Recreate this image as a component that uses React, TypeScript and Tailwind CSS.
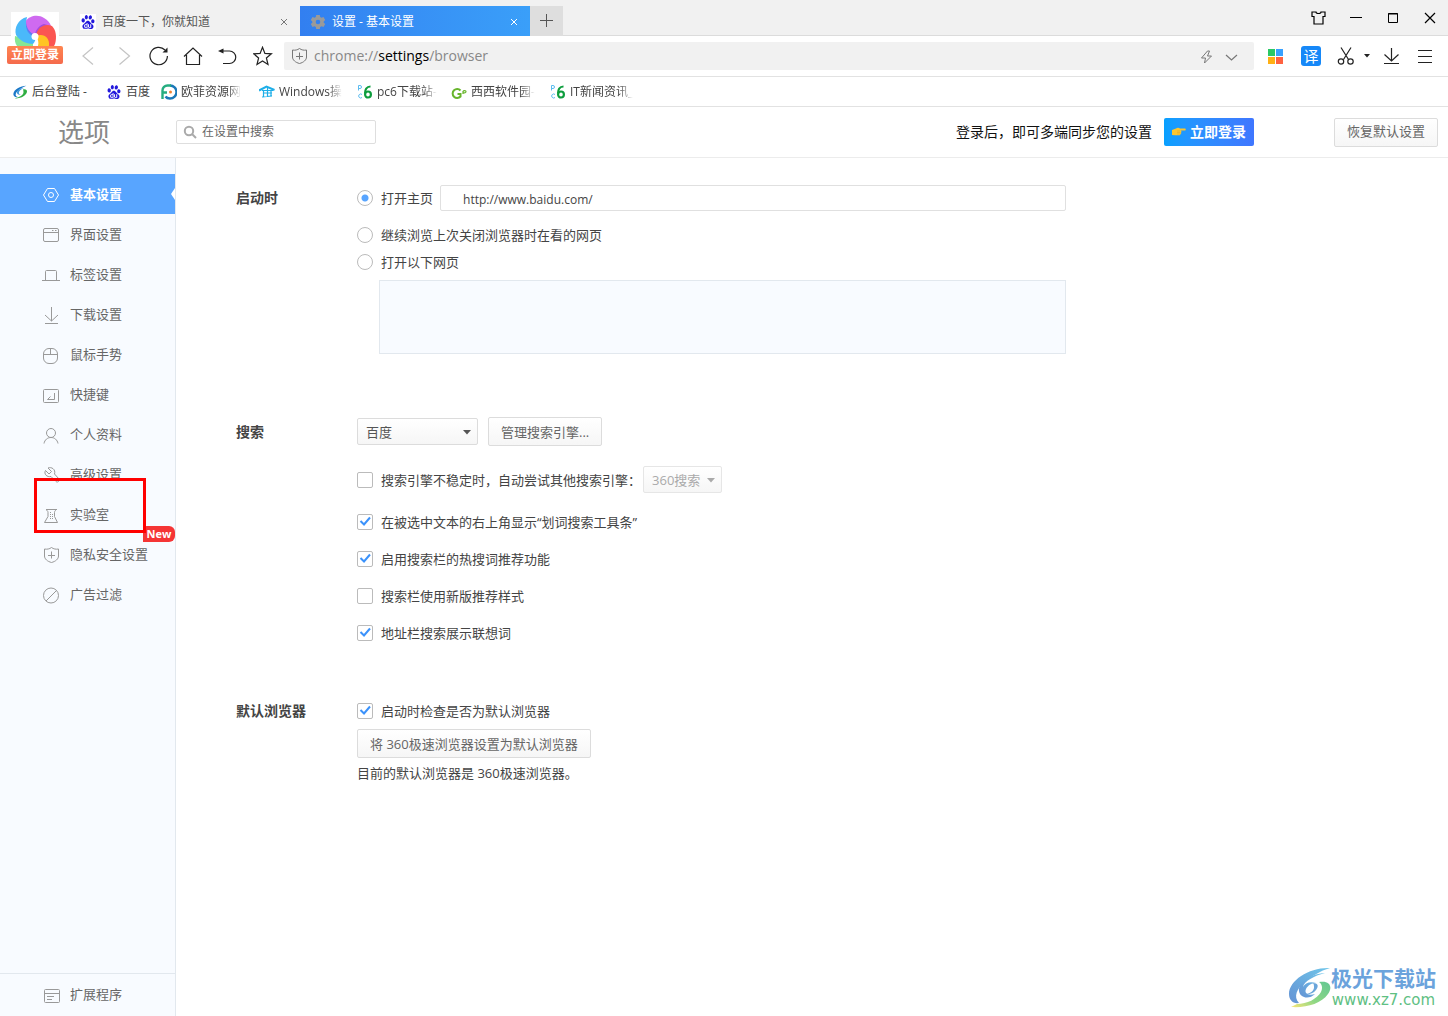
import { useState } from "react";
import type { ReactNode } from "react";
import clsx from "clsx";
import { SiBaidu } from "react-icons/si";

const lineIcon = {
    width: 18,
    height: 18,
    viewBox: "0 0 18 18",
    fill: "none",
    stroke: "currentColor",
    className: "shrink-0",
    "aria-hidden": true,
} as const;

const toolIcon = {
    width: 20,
    height: 20,
    viewBox: "0 0 20 20",
    fill: "none",
    stroke: "currentColor",
    strokeWidth: 1.2,
    "aria-hidden": true,
} as const;

function PinwheelLogo() {
    return (
        <svg width="48" height="34" viewBox="0 0 48 34" aria-hidden="true">
            <rect width="48" height="34" fill="#fff" />
            <path d="M4 24c4 1 12 2 18 8v2H6c-2-3-2.500-6-2-10z" fill="#86e694" />
            <path d="M16 5C7 7 3 16 5 23c3 5 10 9 17 9 2-2 3-5 2-8C17 21 14 13 16 5z" fill="#4ab9fa" />
            <path d="M15.500 8c-2 9 2 15 8.500 17l1-6c-4-2-8-6-9.500-11z" fill="#5a7df4" />
            <path d="M15 9c3-5 12-7 18-3 4 2 6 5 7 8-8-2-13 1-16 9-5-2-9-7-9-14z" fill="#cf6af0" />
            <path d="M24 22c1-5 5-9 9-10l7 2c-7-1-12 2-14 10z" fill="#a14be0" />
            <path d="M25 24c1-9 9-13 16-10 4 4 5 11 3 18l-1 2h-6c0-7-4-11-12-10z" fill="#fb5652" />
            <path d="M25 24c8-3 14 2 13 10H27c1-4 0-7-2-10z" fill="#ffc423" />
            <circle cx="24" cy="24.500" r="3.500" fill="#fff" />
        </svg>
    );
}

function SwirlIcon({ size = 14 }: { size?: number }) {
    return (
        <svg width={size} height={size} viewBox="0 0 42 42" aria-hidden="true">
            <path d="M40 2C22 2 2 13 1 27c0 7 6 11 14 9-8-2-9-9-3-16C18 13 28 7 40 2z" fill="#1b78c8" />
            <path d="M33 10c-10-1-20 5-21 12-1 6 6 9 12 6-5 0-8-3-6-7 2-5 8-9 15-11z" fill="#3b97d8" />
            <path d="M30 13c12-3 15 6 9 14-6 9-20 14-34 13 14-2 23-8 26-15 1-5 0-9-1-12z" fill="#2fae42" />
        </svg>
    );
}

function WatermarkSwirl() {
    return (
        <svg width="42" height="42" viewBox="0 0 42 42" aria-hidden="true">
            <defs>
                <linearGradient id="swirl-blue" x1="1" y1="0" x2="0" y2="1">
                    <stop offset="0" stopColor="#6fc6ea" />
                    <stop offset="1" stopColor="#6593d4" />
                </linearGradient>
                <linearGradient id="swirl-green" x1="1" y1="0" x2="0" y2="1">
                    <stop offset="0" stopColor="#62c792" />
                    <stop offset="0.600" stopColor="#8fd784" />
                    <stop offset="1" stopColor="#fae678" />
                </linearGradient>
            </defs>
            <path d="M41 1C21 0 0 13 0 27c0 6 4 10 10 9-6-6-2-15 6-21C23 9 31 4 41 1z" fill="url(#swirl-blue)" />
            <path d="M36 6C21 7 9 16 10 24c1 7 10 9 16 3-7 2-11-1-9-5 2-4 6-6 10-6-6-2-11 0-13 4 1-6 11-11 22-14z" fill="url(#swirl-blue)" />
            <path d="M24 16c5 0 6 3 3 7-3 4-8 5-12 4 5 0 9-2 10-6 0-2 0-4-1-5z" fill="#6aa5da" />
            <path d="M30 15c11-2 14 5 9 12-7 10-22 14-37 13l6-3c10 0 20-5 24-12 2-4 1-8-2-10z" fill="url(#swirl-green)" />
        </svg>
    );
}

function Pc6Icon() {
    return (
        <svg width="16" height="16" viewBox="0 0 16 16" fill="none" aria-hidden="true">
            <path d="M1.500 6.500v-5H3a1.500 1.500 0 0 1 0 3H1.500M5 10.500a2 2 0 1 0 0 3" stroke="#5cbcf0" />
            <path d="M13.500 2.500C9.500 2.500 8 6 8 9.500" stroke="#0d9d3d" strokeWidth="2.200" />
            <ellipse cx="11" cy="10.500" rx="2.900" ry="3" stroke="#0d9d3d" strokeWidth="2.200" />
        </svg>
    );
}

function FpIcon() {
    return (
        <svg width="16" height="16" viewBox="0 0 16 16" fill="none" aria-hidden="true">
            <path d="M9 1.500a6.500 6.500 0 0 1 0 13c-2 0-3.500-.500-4.500-2" stroke="#1b78b8" strokeWidth="2.400" />
            <path d="M10 1.500H6.500a5 5 0 0 0-5 5V15M1.500 8.500H6" stroke="#25ad80" strokeWidth="2.400" />
            <circle cx="9.500" cy="8" r="1.500" fill="#f08332" />
        </svg>
    );
}

function GraduateIcon() {
    return (
        <svg width="16" height="16" viewBox="0 0 16 16" fill="none" stroke="#1daee8" aria-hidden="true">
            <path d="M0 6.500L7.500 2.500 15.500 6" strokeWidth="2" />
            <path d="M3 6.500h11M4 9h9M3 13l10-1M4.500 6v7M8.500 4v8.500M12 6v6" strokeWidth="1.200" />
        </svg>
    );
}

function GrIcon() {
    return (
        <svg width="16" height="16" viewBox="0 0 16 16" fill="none" stroke="#68b52c" aria-hidden="true">
            <path d="M9.500 6.500a4.500 4.500 0 1 0 0 6V10H6.500" strokeWidth="2" />
            <path d="M12 10V7M12 7.500c.500-1.300 3-1.300 3 0s-1.300 1.500-3 1.200" strokeWidth="1.200" />
        </svg>
    );
}

function HandIcon() {
    return (
        <svg width="14" height="12" viewBox="0 0 14 12" aria-hidden="true">
            <path d="M0 4l4-1.500c1-1 3-1 4 0h5c1 0 1 2 0 2H8.500c1.200.400 1.200 1.500.500 1.800.500.500.400 1.400-.500 1.600 0 .900-.600 1.400-1.500 1.400H3L0 9z" fill="#fcc62f" />
            <path d="M5 5h3M5 6.500h3.500M5 8h3" stroke="#dda028" strokeWidth="0.500" />
        </svg>
    );
}

function GearIcon() {
    return (
        <svg width="16" height="16" viewBox="0 0 16 16" aria-hidden="true">
            <path
                fill="#9a9a9a"
                fillRule="evenodd"
                d="M6.200 1h3.600l.4 2 1.300.8 2-.7 1.700 3-1.500 1.300v1.300l1.500 1.300-1.700 3-2-.7-1.300.8-.4 1.900H6.200l-.4-1.900-1.300-.8-2 .7-1.700-3 1.500-1.300V7.400L.8 6.100l1.700-3 2 .7L5.800 3zM8 5.700a2.300 2.300 0 1 0 0 4.600 2.300 2.300 0 0 0 0-4.600z"
            />
        </svg>
    );
}

function ShieldPlus() {
    return (
        <svg {...lineIcon}>
            <path d="M9.500 1.500c2 1.500 4.500 2 7 1.500v7c0 3-3 5.500-7 6.500-4-1-7-3.500-7-6.500V3c2.500.500 5 0 7-1.500zM9.500 5.500v7M6 9.500h7" />
        </svg>
    );
}

const menuItems: { label: string; icon: ReactNode }[] = [
    {
        label: "基本设置",
        icon: (
            <svg {...lineIcon}>
                <path d="M5.500 2.500h7L16.500 9l-4 6.500h-7L1.500 9z" />
                <circle cx="9" cy="9" r="2.500" />
            </svg>
        ),
    },
    {
        label: "界面设置",
        icon: (
            <svg {...lineIcon}>
                <rect x="1.500" y="2.500" width="15" height="13" rx="1.500" />
                <path d="M1.500 6.500h15M10 4.500h1.500M13 4.500h1.500" />
            </svg>
        ),
    },
    {
        label: "标签设置",
        icon: (
            <svg {...lineIcon}>
                <path d="M0 14.500h18M3.500 14.500v-9c0-.600.400-1 1-1h9c.600 0 1 .400 1 1v9" />
            </svg>
        ),
    },
    {
        label: "下载设置",
        icon: (
            <svg {...lineIcon}>
                <path d="M9.500 1v14M3 9l6.500 6L16 9M3 17.500h13" />
            </svg>
        ),
    },
    {
        label: "鼠标手势",
        icon: (
            <svg {...lineIcon}>
                <rect x="1.500" y="2.500" width="14" height="15" rx="5.500" />
                <path d="M1.500 8.500h14M8.500 2.500v6" />
            </svg>
        ),
    },
    {
        label: "快捷键",
        icon: (
            <svg {...lineIcon}>
                <rect x="1.500" y="3.500" width="15" height="13" rx="1" />
                <path d="M12.500 7v6.500H5.500L8.500 10.500" />
            </svg>
        ),
    },
    {
        label: "个人资料",
        icon: (
            <svg {...lineIcon}>
                <circle cx="9" cy="7" r="4.500" />
                <path d="M2 17.500c.700-3.700 3.500-6 7-6s6.300 2.300 7 6" />
            </svg>
        ),
    },
    {
        label: "高级设置",
        icon: (
            <svg {...lineIcon}>
                <path d="M6 2c3.500-1.500 8 1.500 6.500 6l4.500 5c1 2-1.500 4-3 2.500L9 10.500C5 11.500 1.500 8 3.500 4.500L7 8l2.500-2.500z" />
            </svg>
        ),
    },
    {
        label: "实验室",
        icon: (
            <svg {...lineIcon}>
                <path d="M4 3.500h11M4 3.500c1 1 2 1.500 2 3v4L2.500 16.500h13L12.500 10.500v-4c0-1.500 1-2 2-3" />
                <path d="M8.500 6v8M10.500 8v5" strokeDasharray="1 1" />
            </svg>
        ),
    },
    { label: "隐私安全设置", icon: <ShieldPlus /> },
    {
        label: "广告过滤",
        icon: (
            <svg {...lineIcon}>
                <circle cx="9" cy="9.500" r="7.500" />
                <path d="M14.500 4.500L4 15" />
            </svg>
        ),
    },
];

const bookmarks = [
    { label: "后台登陆 -", icon: <SwirlIcon />, box: "w-[82px]", fade: false },
    { label: "百度", icon: <SiBaidu size={14} color="#2319dc" />, box: "w-[43px]", fade: false },
    { label: "欧菲资源网", icon: <FpIcon />, box: "w-[86px]", fade: true },
    { label: "Windows操", icon: <GraduateIcon />, box: "w-[86px]", fade: true },
    { label: "pc6下载站-", icon: <Pc6Icon />, box: "w-[82px]", fade: true },
    { label: "西西软件园-", icon: <GrIcon />, box: "w-[87px]", fade: true },
    { label: "IT新闻资讯_", icon: <Pc6Icon />, box: "w-[86px]", fade: true },
];

function CloseTab({ className }: { className: string }) {
    return (
        <button aria-label="关闭标签" className={clsx("grid size-4 place-items-center", className)}>
            <svg width="8" height="8" viewBox="0 0 8 8" stroke="currentColor" aria-hidden="true">
                <path d="M1 1l6 6M7 1L1 7" />
            </svg>
        </button>
    );
}

function TabStrip() {
    return (
        <div className="flex h-9 items-end border-b border-[#dcdcdc] bg-[#f1f1f1] pl-[72px]">
            <div className="-mb-px flex h-[30px] flex-1 items-end">
                <div className="flex h-full w-[228px] items-center px-2 pt-px">
                    <span className="grid size-4 place-items-center bg-white">
                        <SiBaidu size={14} color="#2319dc" />
                    </span>
                    <button className="ml-1.5 flex-1 text-left text-xs text-[#555]">百度一下，你就知道</button>
                    <CloseTab className="text-[#777]" />
                </div>
                <div className="flex h-full w-[230px] items-center bg-linear-to-r from-[#327ff0] via-[#3790f5] to-[#3a9ff9] pt-px pr-2 pl-2.5">
                    <GearIcon />
                    <button className="ml-1.5 flex-1 text-left text-xs text-white">设置 - 基本设置</button>
                    <CloseTab className="text-white" />
                </div>
                <button aria-label="新建标签" className="grid h-full w-[33px] place-items-center bg-[#dedede] text-[#555]">
                    <svg width="14" height="14" viewBox="0 0 14 14" stroke="currentColor" aria-hidden="true">
                        <path d="M6.500 0v13M0 6.500h13" />
                    </svg>
                </button>
            </div>
            <div className="flex h-full items-center gap-[17px] pr-2 text-black">
                <button aria-label="皮肤">
                    <svg {...toolIcon}>
                        <path d="M3 4h4c0 2 5 2 5 0h4v4.500h-2V16H5V8.500H3z" />
                    </svg>
                </button>
                <button aria-label="最小化">
                    <svg {...toolIcon} strokeWidth="1">
                        <path d="M4 9.500h12" />
                    </svg>
                </button>
                <button aria-label="最大化">
                    <svg {...toolIcon} strokeWidth="1">
                        <path d="M5.500 5.500h9v9h-9zM5 6h10" />
                    </svg>
                </button>
                <button aria-label="关闭">
                    <svg {...toolIcon}>
                        <path d="M5 5l10 10M15 5L5 15" />
                    </svg>
                </button>
            </div>
        </div>
    );
}

function Toolbar() {
    return (
        <div className="flex h-[41px] items-center border-b border-[#e2e2e2] pl-[78px]">
            <div className="flex gap-[15px] pr-[11px] text-[#222]">
                <button aria-label="后退" className="text-[#c4c4c4]">
                    <svg {...toolIcon}>
                        <path d="M15 1.500L5 10l10 8.500" />
                    </svg>
                </button>
                <button aria-label="前进" className="text-[#c4c4c4]">
                    <svg {...toolIcon}>
                        <path d="M6.500 1.500l10 8.500-10 8.500" />
                    </svg>
                </button>
                <button aria-label="刷新">
                    <svg {...toolIcon}>
                        <path d="M19.400 10A8.700 8.700 0 1 1 17 4" />
                        <path d="M19.500 1.500v5h-5z" fill="currentColor" stroke="none" />
                    </svg>
                </button>
                <button aria-label="主页">
                    <svg {...toolIcon}>
                        <path d="M1 10.500l9-8.500 9 8.500M3.500 9v9.500h13V9" />
                    </svg>
                </button>
                <button aria-label="恢复">
                    <svg {...toolIcon}>
                        <path d="M4 5h7.500a6 6 0 0 1 0 12.500H5" />
                        <path d="M5.500 2.500v5L0 5z" fill="currentColor" stroke="none" />
                    </svg>
                </button>
                <button aria-label="收藏">
                    <svg {...toolIcon}>
                        <path d="M9.500 1.300l2.400 6.100 6.500.4-5 4.200 1.600 6.500-5.500-3.600L4 18.500 5.600 12l-5-4.200 6.500-.4z" />
                    </svg>
                </button>
            </div>
            <div className="flex h-7 min-w-0 flex-1 items-center rounded-[2px] bg-[#f1f1f1] pr-3.5 pl-1.5 text-[#777]">
                <ShieldPlus />
                <div
                    role="textbox"
                    aria-label="地址栏"
                    contentEditable
                    suppressContentEditableWarning
                    className="ml-1.5 flex-1 text-sm text-[#888] outline-none"
                >
                    chrome://<span className="text-black">settings</span>/browser
                </div>
                <button aria-label="极速模式">
                    <svg {...toolIcon} strokeWidth="1">
                        <path d="M11.500 5L5.500 12h4l-1 5 7-7h-4l2-5z" />
                    </svg>
                </button>
                <button aria-label="展开" className="ml-1">
                    <svg {...toolIcon}>
                        <path d="M6 9l5.500 5L17 9" />
                    </svg>
                </button>
            </div>
            <div className="flex items-center pr-3 pl-3.5 text-[#222]">
                <button aria-label="应用" className="mr-[18px] grid grid-cols-2 gap-px">
                    <span className="size-[7px] bg-[#2bc866]" />
                    <span className="size-[7px] bg-[#38a1ff]" />
                    <span className="size-[7px] bg-[#ffb014]" />
                    <span className="size-[7px] bg-[#ff6240]" />
                </button>
                <button className="mr-[15px] size-5 rounded-[3px] bg-[#1688f8] text-center text-[15px] leading-5 text-white">译</button>
                <button aria-label="截图">
                    <svg {...toolIcon}>
                        <path d="M5 1.500l7.500 12M15 1.500L7.500 13.500" />
                        <circle cx="5" cy="15.500" r="2.700" />
                        <circle cx="14.500" cy="15.500" r="2.700" />
                    </svg>
                </button>
                <button aria-label="更多截图选项" className="ml-2">
                    <svg width="6" height="4" viewBox="0 0 6 4" fill="currentColor" aria-hidden="true">
                        <path d="M0 0h6L3 3.500z" />
                    </svg>
                </button>
                <button aria-label="下载" className="ml-3">
                    <svg {...toolIcon}>
                        <path d="M9.500 2v13M2.500 8.500l7 6.500 7-6.500M2 17.500h15" />
                    </svg>
                </button>
                <button aria-label="菜单" className="ml-3.5">
                    <svg {...toolIcon}>
                        <path d="M2 4.500h14M2 10.500h14M2 16.500h14" />
                    </svg>
                </button>
            </div>
        </div>
    );
}

function BookmarkBar() {
    return (
        <nav aria-label="书签" className="flex h-[30px] items-center gap-3 border-b border-[#e2e2e2] pl-3 text-xs text-[#444]">
            {bookmarks.map((item) => (
                <a key={item.label} href="#" className={clsx("flex items-center gap-1", item.box)}>
                    <span className="grid size-4 shrink-0 place-items-center">{item.icon}</span>
                    <span
                        className={clsx(
                            "whitespace-nowrap",
                            item.fade && "[mask-image:linear-gradient(to_right,#000_78%,transparent)]",
                        )}
                    >
                        {item.label}
                    </span>
                </a>
            ))}
        </nav>
    );
}

function PushButton({ children }: { children: ReactNode }) {
    return (
        <button className="h-[29px] rounded-[2px] border border-[#dcdcdc] bg-linear-to-b from-white to-[#f6f6f6] px-3 text-[13px] whitespace-nowrap text-[#666]">
            {children}
        </button>
    );
}

function PageHeader() {
    return (
        <header className="flex h-[51px] items-center border-b border-[#ececec] pr-2.5">
            <h1 className="w-[176px] pr-2 text-center text-[26px] leading-8 text-[#888]">选项</h1>
            <label className="flex h-6 w-[200px] items-center gap-[5px] rounded-[2px] border border-[#dedede] pl-1.5">
                <svg width="14" height="14" viewBox="0 0 14 14" fill="none" stroke="#aaa" strokeWidth="2" className="shrink-0" aria-hidden="true">
                    <circle cx="6" cy="6" r="4.200" />
                    <path d="M9 9l4 4" />
                </svg>
                <input
                    aria-label="在设置中搜索"
                    placeholder="在设置中搜索"
                    className="w-full min-w-0 bg-transparent text-xs outline-none placeholder:text-[#666]"
                />
            </label>
            <p className="ml-auto text-sm text-[#111]">登录后，即可多端同步您的设置</p>
            <button className="mr-20 ml-3 flex h-7 w-[90px] items-center justify-center gap-1 rounded-[2px] bg-linear-to-r from-[#06a0ff] to-[#3f76ff] text-sm font-bold text-white">
                <HandIcon />
                立即登录
            </button>
            <PushButton>恢复默认设置</PushButton>
        </header>
    );
}

function Sidebar() {
    const [active, setActive] = useState("基本设置");

    return (
        <aside className="flex w-[176px] shrink-0 flex-col border-r border-[#e2e8ee] bg-[#f8fbff] text-[13px] text-[#666]">
            <nav className="relative pt-4" aria-label="设置">
                {menuItems.map((item) => (
                    <a
                        key={item.label}
                        href="#"
                        onClick={() => setActive(item.label)}
                        className={clsx(
                            "relative flex h-10 items-center gap-2.5 pt-0.5 pl-[42px]",
                            item.label === active && "bg-[#58a5ff] font-bold text-white",
                        )}
                    >
                        <span className={item.label === active ? "text-white" : "text-[#999]"}>{item.icon}</span>
                        {item.label}
                        {item.label === active && (
                            <svg className="absolute top-3.5 right-0" width="4" height="12" viewBox="0 0 4 12" aria-hidden="true">
                                <path d="M4 0v12L0 6z" fill="#fff" />
                            </svg>
                        )}
                    </a>
                ))}
                <span className="absolute top-[368px] right-0 h-4 w-8 rounded-tl-sm rounded-r-md bg-[#f53535] text-center text-[11px] leading-4 font-bold text-white">
                    New
                </span>
                {/* highlight frame over the lab entry */}
                <span className="pointer-events-none absolute top-80 left-[34px] h-[55px] w-28 border-3 border-[#f00]" />
            </nav>
            <a href="#" className="mt-auto flex h-[43px] items-center gap-2.5 border-t border-[#e2e8ee] pl-[42px]">
                <svg {...lineIcon} stroke="#999">
                    <rect x="2.500" y="3.500" width="15" height="13" rx="1" />
                    <path d="M2.500 7.500h15M5 10.500h7M5 13.500h5" />
                </svg>
                扩展程序
            </a>
        </aside>
    );
}

function Section({ title, className, children }: { title: string; className: string; children: ReactNode }) {
    return (
        <section className={clsx("flex items-start", className)}>
            <h2 className="w-[121px] shrink-0 text-[14px] font-bold text-[#444]">{title}</h2>
            <div className="max-w-[709px] min-w-0 flex-1 leading-5">{children}</div>
        </section>
    );
}

function Radio({ label, defaultChecked }: { label: string; defaultChecked?: boolean }) {
    return (
        <label className="flex h-5 items-center gap-2 whitespace-nowrap">
            <input
                type="radio"
                name="startup"
                defaultChecked={defaultChecked}
                className="size-4 appearance-none rounded-full border border-[#bbb] bg-white checked:bg-[radial-gradient(circle,#58a5ff_3px,transparent_4px)]"
            />
            {label}
        </label>
    );
}

function Check({ label, defaultChecked }: { label: string; defaultChecked?: boolean }) {
    return (
        <label className="flex h-5 items-center gap-2 whitespace-nowrap">
            <span className="relative size-4">
                <input
                    type="checkbox"
                    defaultChecked={defaultChecked}
                    className="peer block size-4 appearance-none rounded-[2px] border border-[#bbb] bg-white"
                />
                <svg
                    className="pointer-events-none absolute inset-0 hidden peer-checked:block"
                    width="16"
                    height="16"
                    viewBox="0 0 16 16"
                    fill="none"
                    stroke="#3b92fb"
                    strokeWidth="2"
                    aria-hidden="true"
                >
                    <path d="M3.500 7L7 10.500l6-7" />
                </svg>
            </span>
            {label}
        </label>
    );
}

function Select({ label, value, className, disabled }: { label: string; value: string; className: string; disabled?: boolean }) {
    return (
        <span className={clsx("relative block shrink-0", disabled ? "text-[#aaa]" : "text-[#555]", className)}>
            <select
                aria-label={label}
                disabled={disabled}
                className={clsx(
                    "block h-[27px] w-full appearance-none rounded-[2px] border bg-linear-to-b from-white to-[#f6f6f6] pl-2 text-[13px]",
                    disabled ? "border-[#e6e6e6]" : "border-[#dcdcdc]",
                )}
            >
                <option>{value}</option>
            </select>
            <svg
                className="pointer-events-none absolute top-3 right-[7px]"
                width="8"
                height="5"
                viewBox="0 0 8 5"
                fill="currentColor"
                aria-hidden="true"
            >
                <path d="M0 0h8L4 4.500z" />
            </svg>
        </span>
    );
}

function Settings() {
    return (
        <main className="min-w-0 flex-1 pt-[27px] pr-4 pl-[60px] text-[13px] text-[#444]">
            <Section title="启动时" className="leading-[26px]">
                <div className="flex items-center gap-[7px]">
                    <Radio label="打开主页" defaultChecked />
                    <input
                        aria-label="主页地址"
                        defaultValue="http://www.baidu.com/"
                        className="h-[26px] min-w-0 flex-1 rounded-[2px] border border-[#e0e0e0] pt-0.5 pl-[22px] text-xs outline-none"
                    />
                </div>
                <div className="mt-3.5 flex flex-col gap-[7px]">
                    <Radio label="继续浏览上次关闭浏览器时在看的网页" />
                    <Radio label="打开以下网页" />
                </div>
                <div className="mt-2 pl-[22px]">
                    <textarea
                        aria-label="启动时打开的网页"
                        className="block h-[74px] w-full resize-none border border-[#e2e8ee] bg-[#f8fbff] outline-none"
                    />
                </div>
            </Section>

            <Section title="搜索" className="mt-[63px] leading-[30px]">
                <div className="flex items-center gap-2.5">
                    <Select label="搜索引擎" value="百度" className="w-[121px]" />
                    <PushButton>管理搜索引擎...</PushButton>
                </div>
                <div className="mt-5 flex items-center gap-0.5">
                    <Check label="搜索引擎不稳定时，自动尝试其他搜索引擎：" />
                    <Select label="备用搜索引擎" value="360搜索" className="w-[79px]" disabled />
                </div>
                <div className="mt-[19px] flex flex-col gap-[17px]">
                    <Check label="在被选中文本的右上角显示“划词搜索工具条”" defaultChecked />
                    <Check label="启用搜索栏的热搜词推荐功能" defaultChecked />
                    <Check label="搜索栏使用新版推荐样式" />
                    <Check label="地址栏搜索展示联想词" defaultChecked />
                </div>
            </Section>

            <Section title="默认浏览器" className="mt-[55px] leading-[26px]">
                <div className="pt-[3px] pb-2">
                    <Check label="启动时检查是否为默认浏览器" defaultChecked />
                </div>
                <div className="flex">
                    <PushButton>将 360极速浏览器设置为默认浏览器</PushButton>
                </div>
                <p className="mt-[5px]">目前的默认浏览器是 360极速浏览器。</p>
            </Section>
        </main>
    );
}

export default function App() {
    return (
        <div className="relative flex min-h-screen flex-col bg-white font-['Open_Sans','Noto_Sans_CJK_SC',sans-serif]">
            <TabStrip />
            <Toolbar />
            <BookmarkBar />
            <PageHeader />
            <div className="flex flex-1">
                <Sidebar />
                <Settings />
            </div>

            <div className="absolute top-3 left-[11px]">
                <PinwheelLogo />
            </div>
            <button className="absolute top-[46px] left-[7px] h-[18px] w-14 rounded-[2px] bg-linear-to-b from-[#ff8550] to-[#f56a4c] text-center text-xs leading-[18px] font-bold text-white">
                立即登录
            </button>

            <div className="absolute right-3 bottom-1.5 flex items-center">
                <WatermarkSwirl />
                <div className="text-center font-bold">
                    <div className="text-[21px] leading-6 text-[#6ba3dc]">极光下载站</div>
                    <div className="font-['DejaVu_Sans',sans-serif] text-[15px] leading-5 font-normal text-[#5fc083]">www.xz7.com</div>
                </div>
            </div>
        </div>
    );
}
